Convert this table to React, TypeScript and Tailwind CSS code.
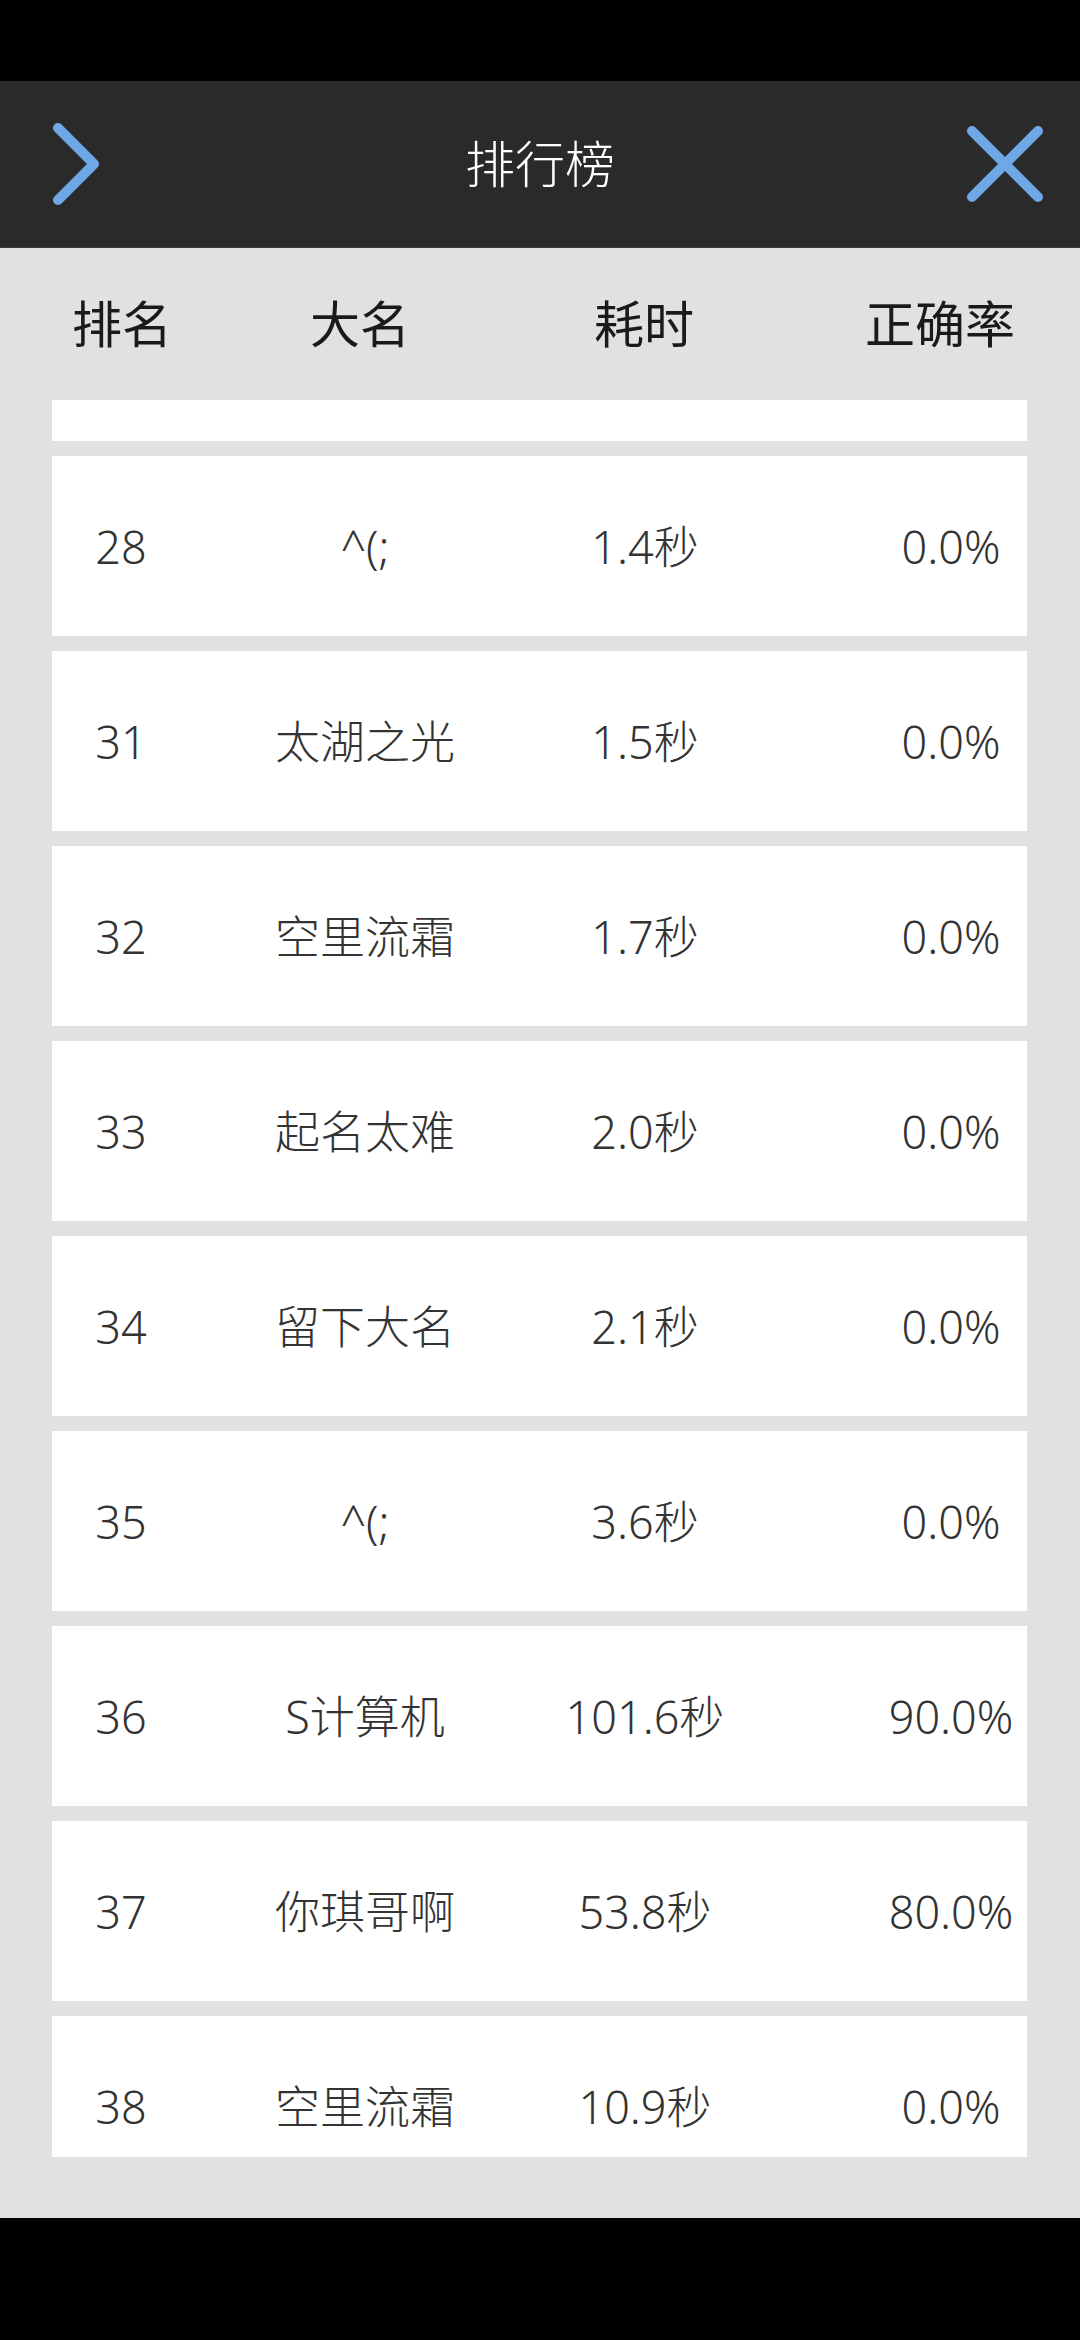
import React from 'react';

const rows = [
  { rank: '', name: '', time: '', rate: '' },
  { rank: '28', name: '^(;', time: '1.4秒', rate: '0.0%' },
  { rank: '31', name: '太湖之光', time: '1.5秒', rate: '0.0%' },
  { rank: '32', name: '空里流霜', time: '1.7秒', rate: '0.0%' },
  { rank: '33', name: '起名太难', time: '2.0秒', rate: '0.0%' },
  { rank: '34', name: '留下大名', time: '2.1秒', rate: '0.0%' },
  { rank: '35', name: '^(;', time: '3.6秒', rate: '0.0%' },
  { rank: '36', name: 'S计算机', time: '101.6秒', rate: '90.0%' },
  { rank: '37', name: '你琪哥啊', time: '53.8秒', rate: '80.0%' },
  { rank: '38', name: '空里流霜', time: '10.9秒', rate: '0.0%' },
];

const font = { fontFamily: '"Noto Sans", "Noto Sans CJK SC", sans-serif' };

export default function App() {
  return (
    <div className="w-[1080px] h-[2340px] bg-black flex flex-col" style={font}>
      <div className="h-[81px] shrink-0 bg-black" />

      <header className="h-[167px] shrink-0 bg-[#2a2a2a] grid grid-cols-[1fr_auto_1fr] items-center border-b border-[#3a3a3a]">
        <div className="pl-[48px] flex items-center">
          <svg width="56" height="92" viewBox="0 0 56 92" fill="none">
            <path d="M10 10 L46 46 L10 82" stroke="#6fa8e6" strokeWidth="10" strokeLinecap="round" strokeLinejoin="round" />
          </svg>
        </div>
        <h1 className="text-[50px] leading-none text-white font-light">排行榜</h1>
        <div className="pr-[32px] flex items-center justify-end">
          <svg width="86" height="86" viewBox="0 0 86 86" fill="none">
            <path d="M10 10 L76 76 M76 10 L10 76" stroke="#6fa8e6" strokeWidth="10" strokeLinecap="round" />
          </svg>
        </div>
      </header>

      <main className="flex-1 bg-[#e1e1e1] flex flex-col">
        <div className="h-[152px] shrink-0 flex items-center text-[50px] leading-none text-[#1a1a1a]">
          <div className="w-[244px] text-center">排名</div>
          <div className="w-[232px] text-center">大名</div>
          <div className="w-[336px] text-center">耗时</div>
          <div className="w-[256px] text-center">正确率</div>
        </div>

        {/* scrolled list, first card partly under the header row */}
        <div className="h-[1757px] shrink-0 overflow-hidden pl-[52px] pr-[53px]">
          <div className="-mt-[139px] flex flex-col gap-[15px]">
            {rows.map((r, i) => (
              <div key={i} className="h-[180px] shrink-0 bg-white flex items-center text-[45px] leading-none font-light text-[#333]">
                <div className="w-[138px] text-center">{r.rank}</div>
                <div className="w-[350px] text-center">{r.name}</div>
                <div className="w-[210px] text-center">{r.time}</div>
                <div className="w-[152px] ml-auto text-center">{r.rate}</div>
              </div>
            ))}
          </div>
        </div>
      </main>

      <div className="h-[122px] shrink-0 bg-black" />
    </div>
  );
}
